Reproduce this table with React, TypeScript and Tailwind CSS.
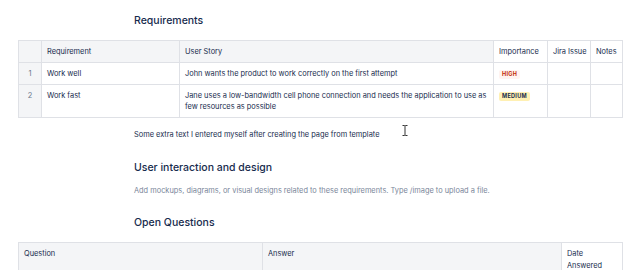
import React from "react";

const font = { fontFamily: "Inter, 'Noto Sans', sans-serif" };

function Lozenge({ label, kind }: { label: string; kind: "high" | "medium" }) {
  return (
    <span
      className={
        "inline-block rounded-[2px] px-[3px] text-[5.5px] font-bold leading-[9px] tracking-[0.3px] " +
        (kind === "high" ? "bg-[#fff3f0] text-[#bf2600]" : "bg-[#fff0b3] text-[#172b4d]")
      }
    >
      {label}
    </span>
  );
}

export default function App() {
  const th = "border border-[#dfe1e6] bg-[#f4f5f7] px-[5px] py-[5px] text-left font-normal align-top";
  const thw = "border border-[#dfe1e6] bg-white px-[5px] py-[5px] text-left font-normal align-top whitespace-nowrap";
  const td = "border border-[#dfe1e6] px-[5px] py-[5px] align-top";
  const num = "border border-[#dfe1e6] bg-[#f4f5f7] px-[5px] py-[5px] text-center align-top text-[#6b778c]";
  return (
    <div className="relative h-[270px] w-[640px] overflow-hidden bg-white text-[#172b4d]" style={font}>
      <div className="flex flex-col pt-[13px]">
        <h2 className="pl-[134px] text-[10.5px] leading-[15px] font-medium">Requirements</h2>
        <div className="mx-[18px] mt-[12px]">
          <table className="w-full table-fixed border-collapse text-[7.4px] leading-[11px]">
            <colgroup>
              <col className="w-[23px]" />
              <col className="w-[138px]" />
              <col className="w-[314px]" />
              <col className="w-[54px]" />
              <col className="w-[43px]" />
              <col className="w-[32px]" />
            </colgroup>
            <thead>
              <tr>
                <th className={th}></th>
                <th className={th}>Requirement</th>
                <th className={th}>User Story</th>
                <th className={thw}>Importance</th>
                <th className={thw}>Jira Issue</th>
                <th className={thw}>Notes</th>
              </tr>
            </thead>
            <tbody>
              <tr>
                <td className={num}>1</td>
                <td className={td}>Work well</td>
                <td className={td}>John wants the product to work correctly on the first attempt</td>
                <td className={td}>
                  <Lozenge label="HIGH" kind="high" />
                </td>
                <td className={td}></td>
                <td className={td}></td>
              </tr>
              <tr>
                <td className={num}>2</td>
                <td className={td}>Work fast</td>
                <td className={td}>
                  Jane uses a low-bandwidth cell phone connection and needs the application to use as few resources as possible
                </td>
                <td className={td}>
                  <Lozenge label="MEDIUM" kind="medium" />
                </td>
                <td className={td}></td>
                <td className={td}></td>
              </tr>
            </tbody>
          </table>
        </div>
        <p className="mt-[11px] pl-[134px] text-[7.4px] leading-[11px]">
          Some extra text I entered myself after creating the page from template
        </p>
        <h2 className="mt-[20px] pl-[134px] text-[10.5px] leading-[15px] font-medium">User interaction and design</h2>
        <p className="mt-[10px] pl-[134px] text-[7.4px] leading-[11px] text-[#7a869a]">
          Add mockups, diagrams, or visual designs related to these requirements. Type /image to upload a file.
        </p>
        <h2 className="mt-[19px] pl-[134px] text-[10.5px] leading-[15px] font-medium">Open Questions</h2>
        <div className="mx-[18px] mt-[12px]">
          <table className="w-full table-fixed border-collapse text-[7.4px] leading-[11.5px]">
            <colgroup>
              <col className="w-[244px]" />
              <col className="w-[299px]" />
              <col className="w-[61px]" />
            </colgroup>
            <thead>
              <tr>
                <th className={th}>Question</th>
                <th className={th}>Answer</th>
                <th className="border border-[#dfe1e6] bg-white px-[5px] py-[5px] text-left font-normal align-top">
                  Date
                  <br />
                  Answered
                </th>
              </tr>
            </thead>
          </table>
        </div>
      </div>
      <svg className="absolute left-[402px] top-[125px]" width="6" height="11" viewBox="0 0 6 11">
        <path d="M0.5 0.5h2l0.5 0.5 0.5-0.5h2M3 1v9M0.5 10.5h2l0.5-0.5 0.5 0.5h2" stroke="#333" strokeWidth="1" fill="none" />
      </svg>
    </div>
  );
}
